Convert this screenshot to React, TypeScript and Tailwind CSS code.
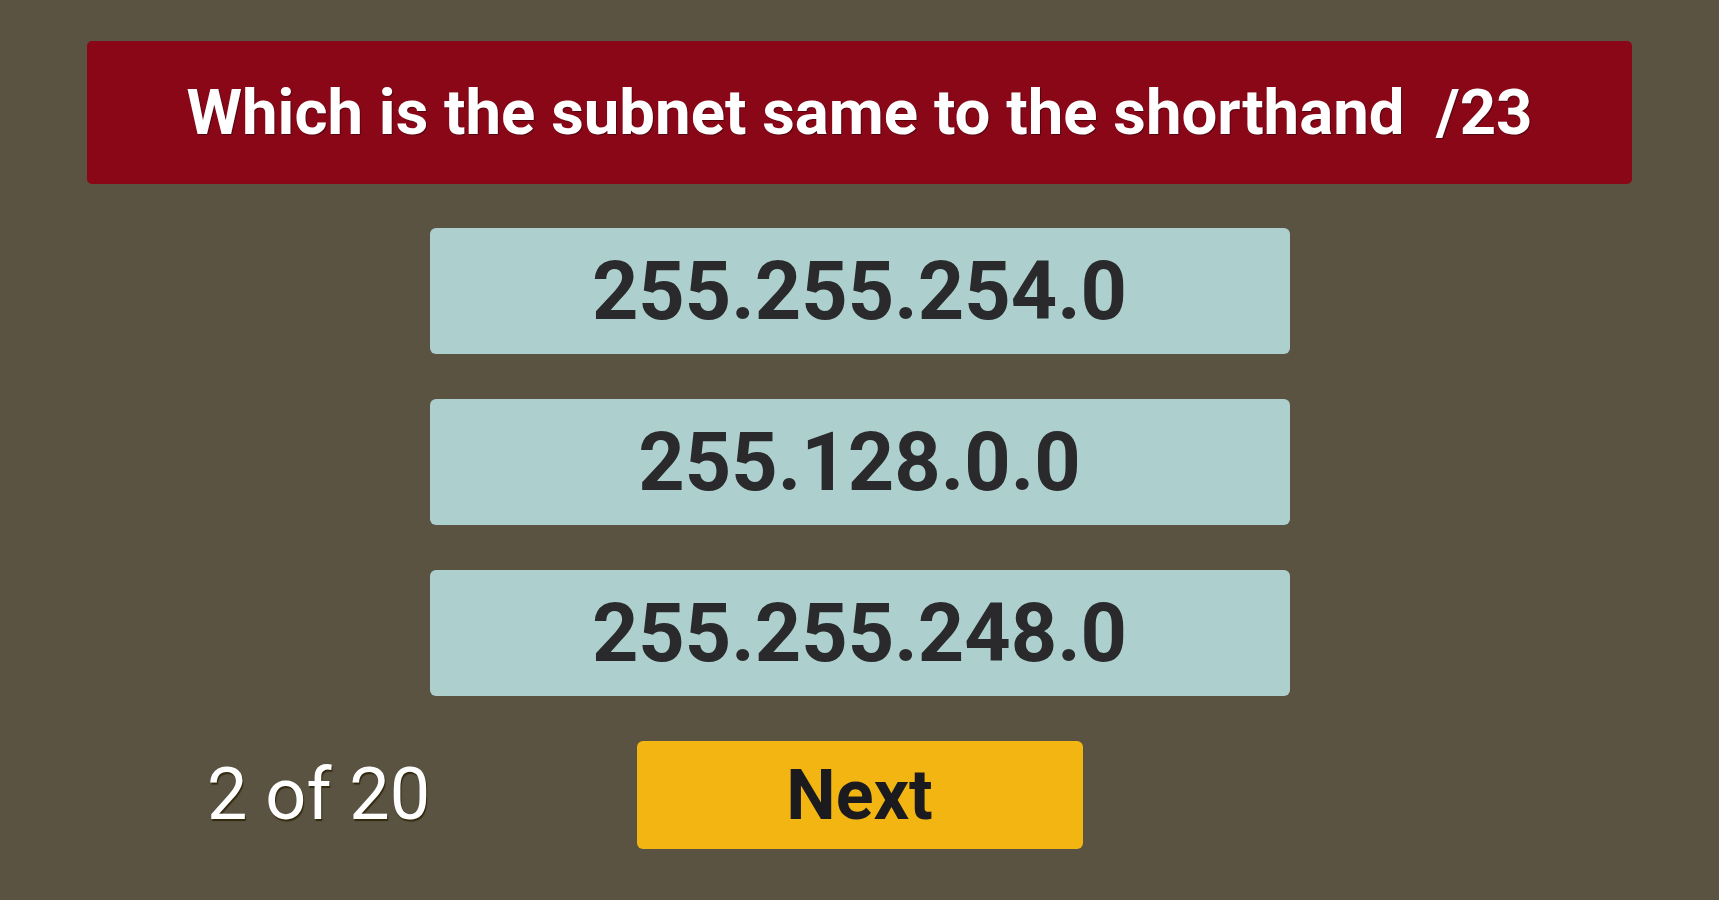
export default function App() {
  const options = ['255.255.254.0', '255.128.0.0', '255.255.248.0']

  return (
    <div className="min-h-[900px] w-full bg-[#5a5342] pt-[41px] font-['Roboto',sans-serif]">
      {/* question */}
      <div className="mx-[87px] flex h-[143px] items-center justify-center rounded-[5px] bg-[#8a0718]">
        <h1 className="whitespace-pre text-[63.5px] font-bold leading-none text-white [text-shadow:1px_1px_1px_rgba(0,0,0,0.4)]">
          {'Which is the subnet same to the shorthand  /23'}
        </h1>
      </div>

      {/* answers */}
      <div className="mt-[44px] flex flex-col items-center gap-[45px]">
        {options.map((opt) => (
          <button
            key={opt}
            className="flex h-[126px] w-[860px] items-center justify-center rounded-[6px] bg-[#add0ce] text-[81px] font-bold leading-none text-[#2a2a2c]"
          >
            {opt}
          </button>
        ))}
      </div>

      {/* footer */}
      <div className="mt-[45px] grid grid-cols-[1fr_446px_1fr] items-center">
        <span className="pl-[207px] text-[72px] leading-none text-white [text-shadow:1px_2px_1px_rgba(40,30,0,0.8)]">
          2 of 20
        </span>
        <button className="flex h-[108px] items-center justify-center rounded-[6px] bg-[#f2b512] text-[70px] font-bold leading-none text-[#1b1b1f]">
          Next
        </button>
        <div />
      </div>
    </div>
  )
}
